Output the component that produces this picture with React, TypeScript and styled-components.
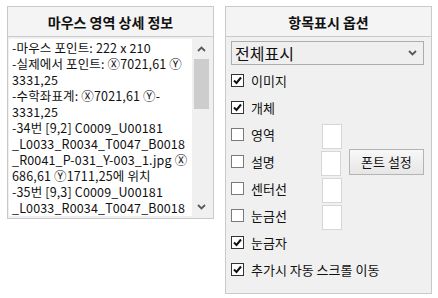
import React from 'react'
import styled, { createGlobalStyle } from 'styled-components'

const GlobalStyle = createGlobalStyle`
  body {
    margin: 0;
    background: #ffffff;
    font-family: "Noto Sans CJK KR", "Liberation Sans", sans-serif;
  }
`

const infoItems: string[][] = [
  ['-마우스 포인트: 222 x 210'],
  ['-실제에서 포인트: Ⓧ7021,61 Ⓨ', '3331,25'],
  ['-수학좌표계: Ⓧ7021,61 Ⓨ-', '3331,25'],
  ['-34번 [9,2] C0009_U00181', '_L0033_R0034_T0047_B0018', '_R0041_P-031_Y-003_1.jpg Ⓧ', '686,61 Ⓨ1711,25에 위치'],
  ['-35번 [9,3] C0009_U00181', '_L0033_R0034_T0047_B0018'],
]

const options = [
  { label: '이미지', checked: true, color: false, font: false },
  { label: '개체', checked: true, color: false, font: false },
  { label: '영역', checked: false, color: true, font: false },
  { label: '설명', checked: false, color: true, font: true },
  { label: '센터선', checked: false, color: true, font: false },
  { label: '눈금선', checked: false, color: true, font: false },
  { label: '눈금자', checked: true, color: false, font: false },
  { label: '추가시 자동 스크롤 이동', checked: true, color: false, font: false },
]

const Chevron = ({ up }: { up?: boolean }) => (
  <svg width="9" height="6" viewBox="0 0 9 6">
    <path
      d={up ? 'M1 5 L4.5 1.5 L8 5' : 'M1 1 L4.5 4.5 L8 1'}
      fill="none"
      stroke="#5a5a5a"
      strokeWidth="1.8"
    />
  </svg>
)

const Check = () => (
  <svg width="11" height="11" viewBox="0 0 11 11">
    <path d="M2 5.5 L4.5 8 L9 2.5" fill="none" stroke="#111" strokeWidth="2" />
  </svg>
)

const App = () => {
  return (
    <Page>
      <GlobalStyle />
      <InfoPanel>
        <Header>마우스 영역 상세 정보</Header>
        <InfoBody>
          <ListBox>
            <ListText>
              {infoItems.map((item, i) =>
                item.map((line, j) => <Line key={i + '-' + j}>{line}</Line>)
              )}
            </ListText>
            <ScrollBar>
              <Arrow><Chevron up /></Arrow>
              <Track>
                <Thumb />
              </Track>
              <Arrow><Chevron /></Arrow>
            </ScrollBar>
          </ListBox>
        </InfoBody>
      </InfoPanel>

      <OptionPanel>
        <Header>항목표시 옵션</Header>
        <OptionBody>
          <Select>
            <span>전체표시</span>
            <Chevron />
          </Select>
          <Rows>
            {options.map((o) => (
              <Row key={o.label}>
                <Box checked={o.checked}>{o.checked && <Check />}</Box>
                <Label>{o.label}</Label>
                {o.color && <ColorBox />}
                {o.font && <FontButton>폰트 설정</FontButton>}
              </Row>
            ))}
          </Rows>
        </OptionBody>
      </OptionPanel>
    </Page>
  )
}

export default App

const Page = styled.div`
  display: flex;
  align-items: flex-start;
  gap: 11px;
  padding: 6px 0 0 7px;
`
const InfoPanel = styled.div`
  width: 205px;
  height: 211px;
  border: 1px solid #c9c9c9;
  display: flex;
  flex-direction: column;
  background: #f0f0f0;
`
const Header = styled.div`
  height: 29px;
  flex-shrink: 0;
  border-bottom: 1px solid #c9c9c9;
  background: #f4f4f4;
  display: flex;
  align-items: center;
  justify-content: center;
  font-size: 14px;
  font-weight: 700;
  color: #111;
`
const InfoBody = styled.div`
  flex: 1;
  padding: 2px 2px 2px 1px;
  display: flex;
  min-height: 0;
`
const ListBox = styled.div`
  flex: 1;
  display: flex;
  background: #ffffff;
  overflow: hidden;
`
const ListText = styled.div`
  flex: 1;
  padding: 1px 0 0 3px;
  overflow: hidden;
`
const Line = styled.div`
  font-size: 12.5px;
  line-height: 16px;
  color: #111;
  white-space: nowrap;
  letter-spacing: 0.15px;
`
const ScrollBar = styled.div`
  width: 19px;
  background: #f0f0f0;
  display: flex;
  flex-direction: column;
`
const Arrow = styled.div`
  height: 19px;
  display: flex;
  align-items: center;
  justify-content: center;
`
const Track = styled.div`
  flex: 1;
  padding: 1px 2px;
`
const Thumb = styled.div`
  height: 50px;
  background: #cdcdcd;
`
const OptionPanel = styled.div`
  width: 205px;
  height: 286px;
  border: 1px solid #c9c9c9;
  display: flex;
  flex-direction: column;
  background: #f0f0f0;
`
const OptionBody = styled.div`
  padding: 4px 7px 0 5px;
`
const Select = styled.div`
  height: 22px;
  border: 1px solid #acacac;
  background: #efefef;
  display: flex;
  align-items: center;
  justify-content: space-between;
  padding: 0 6px 0 3px;
  font-size: 16px;
  color: #111;
`
const Rows = styled.div`
  display: flex;
  flex-direction: column;
  padding-top: 2px;
`
const Row = styled.div`
  height: 27px;
  display: flex;
  align-items: center;
`
const Box = styled.div<{ checked: boolean }>`
  width: 13px;
  height: 13px;
  box-sizing: border-box;
  border: 1px solid ${(p) => (p.checked ? '#333333' : '#7a7a7a')};
  background: #ffffff;
  display: flex;
  align-items: center;
  justify-content: center;
`
const Label = styled.div`
  width: 71px;
  margin-left: 7px;
  font-size: 13px;
  color: #111;
  white-space: nowrap;
`
const ColorBox = styled.div`
  width: 20px;
  height: 25px;
  box-sizing: border-box;
  border: 1px solid #d6d6d6;
  background: #ffffff;
  margin-top: 3px;
`
const FontButton = styled.div`
  margin-left: 8px;
  width: 76px;
  height: 26px;
  box-sizing: border-box;
  border: 1px solid #b4b4b4;
  background: linear-gradient(#f8f8f8, #e6e6e6);
  display: flex;
  align-items: center;
  justify-content: center;
  font-size: 13px;
  color: #111;
`
